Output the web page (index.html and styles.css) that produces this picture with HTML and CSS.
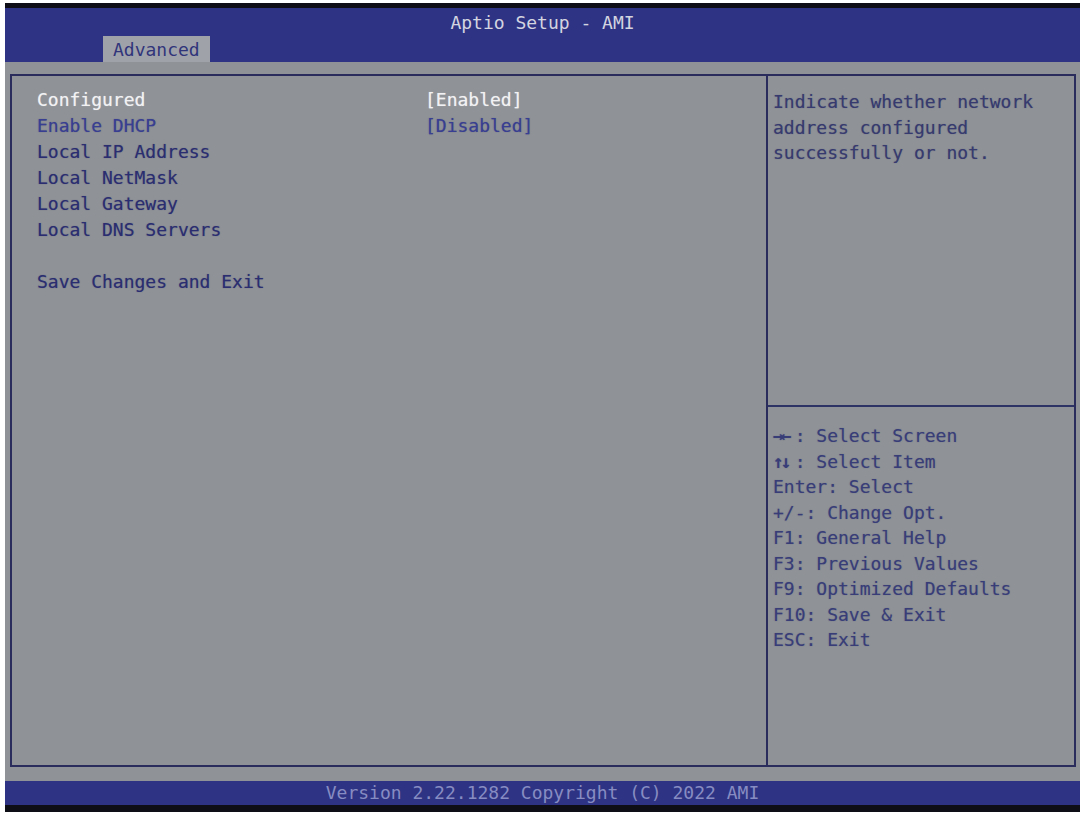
FILE: index.html
```html
<!DOCTYPE html>
<html lang="en">
<head>
  <meta charset="UTF-8">
  <title>Aptio Setup - AMI</title>
  <link rel="stylesheet" href="styles.css">
</head>
<body>
  <div class="screen">
    <div class="header">
      <div class="title">Aptio Setup - AMI</div>
      <div class="tabs">
        <div class="tab">Advanced</div>
      </div>
    </div>
    <div class="body">
      <div class="panel">
        <div class="main">
          <div class="item selected"><span class="name">Configured</span><span class="value">[Enabled]</span></div>
          <div class="item option"><span class="name">Enable DHCP</span><span class="value">[Disabled]</span></div>
          <div class="item"><span class="name">Local IP Address</span></div>
          <div class="item"><span class="name">Local NetMask</span></div>
          <div class="item"><span class="name">Local Gateway</span></div>
          <div class="item"><span class="name">Local DNS Servers</span></div>
          <div class="item spacer"></div>
          <div class="item"><span class="name">Save Changes and Exit</span></div>
        </div>
        <div class="side">
          <div class="help">Indicate whether network<br>address configured<br>successfully or not.</div>
          <div class="keys">
            <div><span class="arrows">→←</span>: Select Screen</div>
            <div><span class="arrows">↑↓</span>: Select Item</div>
            <div>Enter: Select</div>
            <div>+/-: Change Opt.</div>
            <div>F1: General Help</div>
            <div>F3: Previous Values</div>
            <div>F9: Optimized Defaults</div>
            <div>F10: Save &amp; Exit</div>
            <div>ESC: Exit</div>
          </div>
        </div>
      </div>
    </div>
    <div class="footer">Version 2.22.1282 Copyright (C) 2022 AMI</div>
  </div>
</body>
</html>
```

FILE: styles.css
```css
body { margin: 0; background: #fff; font-family: "DejaVu Sans Mono", "Liberation Mono", monospace; font-size: 18px; }
.screen { margin: 3px 4px 0 5px; height: 809px; display: flex; flex-direction: column; background: #0d0e16; padding-top: 5px; padding-bottom: 7px; box-sizing: border-box; }
.header { height: 54px; background: #2e3483; display: flex; flex-direction: column; }
.title { height: 28px; line-height: 29px; text-align: center; color: #d3d4e0; }
.tabs { height: 26px; display: flex; padding-left: 98px; }
.tab { background: #a0a2aa; color: #30357a; padding: 0 10px; line-height: 27px; }
.body { flex: 1; background: #8f9296; padding: 12px 4px 14px 5px; display: flex; }
.panel { flex: 1; display: flex; border: 2px solid #2a2d5c; }
.main { width: 756px; border-right: 2px solid #2a2d5c; padding: 11px 0 0 25px; box-sizing: border-box; }
.item { display: flex; height: 26px; line-height: 26px; color: #2a2d70; text-shadow: 0 0 1px rgba(42, 45, 112, 0.5); }
.item .name { width: 388px; }
.item.selected { color: #f2f2f4; text-shadow: 0 0 1px rgba(255, 255, 255, 0.5); }
.item.option { color: #383e92; }
.side { flex: 1; display: flex; flex-direction: column; }
.help { height: 331px; padding: 13px 0 0 5px; box-sizing: border-box; line-height: 25.5px; color: #363a6e; border-bottom: 2px solid #2e3366; text-shadow: 0 0 1px rgba(54, 58, 110, 0.5); }
.keys { padding: 16px 0 0 5px; line-height: 25.5px; color: #383d78; text-shadow: 0 0 1px rgba(56, 61, 120, 0.5); }
.arrows { display: inline-block; width: 21.7px; font-weight: bold; letter-spacing: -3px; }
.footer { height: 24px; line-height: 24px; background: #2e3483; color: #878cc2; text-align: center; }
```
